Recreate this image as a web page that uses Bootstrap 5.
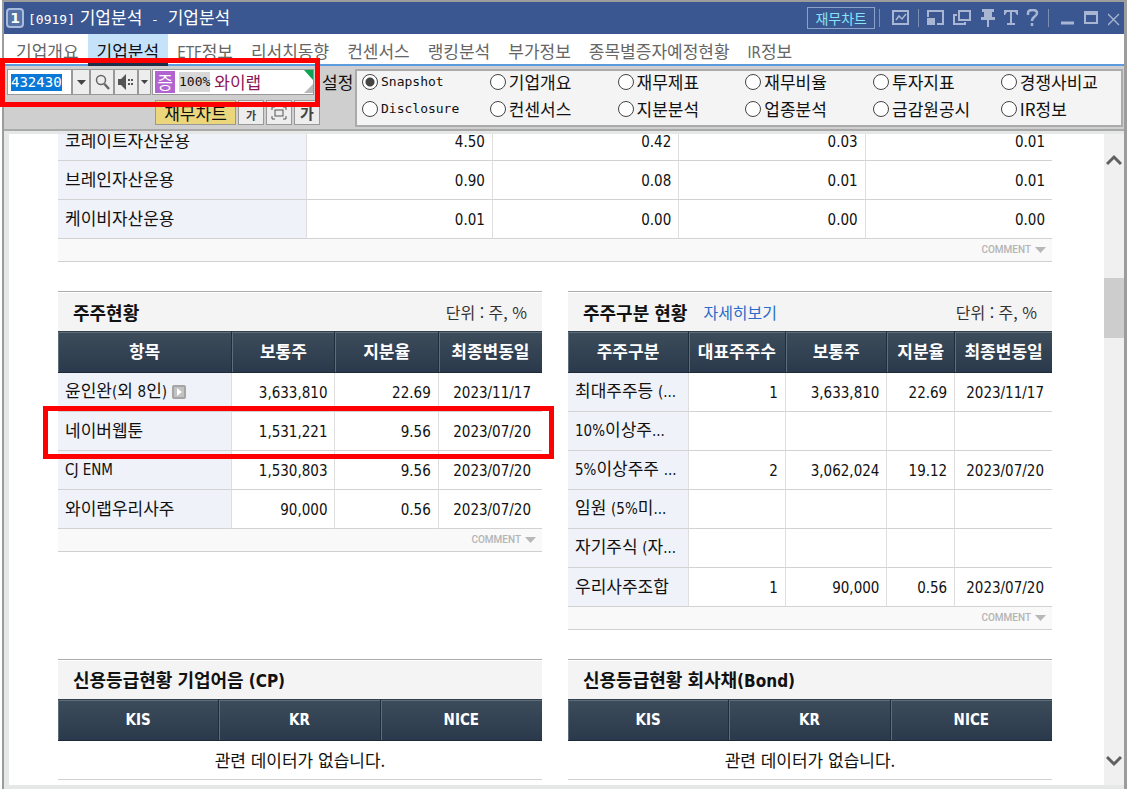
<!DOCTYPE html>
<html lang="ko">
<head>
<meta charset="utf-8">
<meta name="viewport" content="width=device-width, initial-scale=1">
<title>[0919] 기업분석 - 기업분석</title>
<link href="https://cdn.jsdelivr.net/npm/bootstrap@5.3.0/dist/css/bootstrap.min.css" rel="stylesheet">
<style>
  body { font-family: "Noto Sans CJK KR", sans-serif; font-size: 17px; line-height: 24px; color: #111; background: #fff; }
  button, input { font-family: inherit; line-height: inherit; }
  button { border: 0; padding: 0; background: none; color: inherit; }
  .latin { font-family: "DejaVu Sans Condensed", "Noto Sans", sans-serif; font-size: 15px; }
  .mono { font-family: "DejaVu Sans Mono", monospace; font-size: 13px; }
  .app { height: 100vh; margin-left: 2px; border: solid #9c9c9c; border-width: 2px 3px 0 2px; background: #e6e8e7; }

  .titlebar { height: 32px; padding: 0 4px 0 2px; background: #3a5791; color: #fff; }
  .winno { width: 18px; height: 20px; border: 2px solid #a9bbdd; border-radius: 4px; background: #5673a8; font: bold 14px/16px "DejaVu Sans", sans-serif; text-align: center; }
  .chartlink { height: 22px; padding: 0 7px; border: 1px solid #8da0c8; color: #86e4f6; font-size: 14px; line-height: 20px; }
  .titlebar svg { display: block; fill: none; stroke: #a9b6d3; stroke-width: 2; }
  .sep { width: 1px; height: 18px; background: #7e8db0; }

  .tabs { height: 32px; background: #fff; border-bottom: 2px solid #5d9bdf; padding-left: 3px; }
  .tabs a { height: 32px; padding: 0 9px; line-height: 34px; color: #666; text-decoration: none; white-space: nowrap; }
  .tabs a.active { background: #c5e2fb; color: #111; border-bottom: 3px solid #1d2e49; }

  .toolbar { height: 65px; background: #cfcfcf; border-bottom: 2px solid #a9a9a9; padding: 3px 0 3px 3px; }
  .tools { width: 348px; }
  .tools .line { height: 26px; }
  .codebox { width: 65px; height: 26px; border: 1px solid #999; background: #fff; padding: 0 3px; }
  .codebox input { width: 51px; border: 0; padding: 0; background: #0a78d6; color: #fff; font-family: "DejaVu Sans Mono", monospace; font-size: 14px; line-height: 17px; outline: 0; }
  .tbtn { width: 24px; height: 26px; border: 1px solid #999; background: #ededed; display: flex; align-items: center; justify-content: center; flex-shrink: 0; }
  .tbtn.drop { width: 18px; }
  .tbtn.drop-sm { width: 13px; margin-right: 1px; }
  .lower { gap: 2px; margin-right: 35px; padding-top: 5px; }
  .lower .tbtn { width: 26px; height: 25px; color: #444; font-weight: 700; }
  .lower .small-ga { font-size: 11px; padding-top: 5px; }
  .lower .big-ga { font-size: 15px; }
  .yellow { width: 81px; height: 25px; border: 1px solid #999; background: #ebd67c; line-height: 23px; }
  .namebox { width: 162px; height: 26px; border: 1px solid #999; background: #fff; padding-left: 2px; color: #8c1556; flex-shrink: 0; }
  .namebox .kind { width: 20px; height: 22px; background: #b263cf; color: #fff; text-align: center; line-height: 22px; }
  .namebox .pct { background: #d8d8d8; color: #111; height: 20px; line-height: 20px; }
  .corner { right: 0; top: 0; }
  .redbox { border: 5px solid #f00; pointer-events: none; }
  .redtools { left: -7px; top: -11px; width: 320px; height: 49px; z-index: 2; }
  .panel { border: 2px solid #ababab; background: #f4f4f4; height: 58px; padding-left: 5px; display: grid; grid-template-columns: repeat(5, 17fr) 16fr; grid-template-rows: 22px 32px; margin-right: 1px; }
  .panel label { display: flex; align-items: center; gap: 3px; white-space: nowrap; }
  .panel input { appearance: none; width: 16px; height: 16px; margin: 0; border: 1px solid #444; border-radius: 50%; background: #fff; }
  .panel input:checked { background: radial-gradient(circle, #444 4px, #fff 5px); }

  .view { margin: 3px 0 4px 5px; background: #fff; overflow: hidden; min-height: 0; }
  .doc { padding: 0 52px 0 49px; margin-top: -12px; }
  .duo { display: grid; grid-template-columns: 1fr 1fr; column-gap: 26px; align-items: start; }
  .grid { width: 100%; table-layout: fixed; border-collapse: separate; border-spacing: 0; margin: 0; }
  .grid td, .grid tbody th { height: 39px; padding: 0 7px; border-bottom: 1px solid #d2d2d2; border-right: 1px solid #dedede; white-space: nowrap; }
  .grid tbody th { background: #eff2f8; font-weight: 400; padding-bottom: 3px; line-height: 24px; }
  .grid td { font-family: "DejaVu Sans Condensed", "Noto Sans", sans-serif; font-size: 15px; text-align: right; padding-top: 2px; }
  .grid tr > :last-child { border-right: 0; }
  .grid td.none { font-family: inherit; font-size: 17px; text-align: center; padding: 0; }
  .dated td:last-child { padding-right: 11px; }
  .dated.wide td:last-child { padding-right: 8px; }
  .grid thead th { height: 42px; padding: 0 0 3px; color: #fff; text-align: center; font-weight: 700; white-space: nowrap; background: linear-gradient(#3d4c5a, #2a3a4c); border-top: 1px solid #333f4b; border-bottom: 1px solid #1d2a38; border-right: 1px solid #202e3c; box-shadow: inset 1px 1px #5c6d7b; }
  .grid thead th.agency { font-family: "DejaVu Sans Condensed", sans-serif; font-size: 15px; padding: 0; }
  .c-fund col:first-child { width: 25%; }
  .c-hold col:first-child { width: 36%; }
  .c-kind col:nth-child(1) { width: 25%; }
  .c-kind col:nth-child(2) { width: 20%; }
  .c-kind col:nth-child(3) { width: 21%; }
  .c-kind col:nth-child(4) { width: 14%; }
  .foot { height: 23px; border-bottom: 1px solid #d0d0d0; background: #f9f9f9; padding-right: 6px; }
  .foot button { font: 500 10px/20px Roboto, sans-serif; color: #b4b4b4; display: flex; align-items: center; gap: 4px; }
  .head { height: 40px; border-top: 1px solid #adadad; background: #f4f4f4; box-shadow: inset 0 1px #fff; padding: 0 15px; }
  .head h2 { font-size: 18px; font-weight: 700; margin: 0; line-height: 24px; }
  .head h2 .latin { font-size: 17px; }
  .head a { color: #2a6bc9; font-size: 16px; text-decoration: none; }
  .unit { font-size: 16px; color: #333; }
  .gap-sec { margin-top: 29px; }
  .play { width: 14px; height: 14px; }
  .marked { position: relative; }
  .marked th::after { content: ""; position: absolute; inset: -6px -12px -8px -15px; border: 5px solid #f00; pointer-events: none; }

  .scroll { width: 20px; background: #f0f0f0; margin: 3px 0 4px; padding: 20px 0 18px; }
  .scroll .thumb { margin-top: 112px; height: 60px; background: #cdcdcd; }
</style>
</head>
<body>
<div class="app d-flex flex-column">
  <header class="titlebar d-flex align-items-center flex-shrink-0">
    <span class="winno flex-shrink-0">1</span>
    <span class="ms-1 text-nowrap"><span class="mono">[0919]</span> 기업분석 <span class="mono mx-1">-</span> 기업분석</span>
    <div class="ms-auto d-flex align-items-center">
      <button class="chartlink">재무차트</button>
      <span class="sep mx-1"></span>
      <button class="ms-2" aria-label="차트"><svg width="18" height="16"><rect x="1" y="1" width="15" height="13"/><path d="M4 10l3-4 3 3 4-5" stroke-width="1.5"/></svg></button>
      <span class="sep ms-2"></span>
      <button class="ms-2" aria-label="화면 크기"><svg width="18" height="16"><path d="M1 7V1h15v13h-6"/><rect x="0" y="8" width="8" height="7" fill="#a9b6d3" stroke="none"/></svg></button>
      <button class="ms-2" aria-label="복사"><svg width="19" height="16"><path d="M6 1h11v9H6z"/><path d="M4 5H1v9h11v-2"/></svg></button>
      <button class="ms-2" aria-label="고정"><svg width="16" height="18"><path d="M2 0h12v3h-2v5h3v3H9v7H7v-7H1V8h3V3H2z" fill="#a9b6d3" stroke="none"/></svg></button>
      <button class="ms-2" aria-label="글꼴"><svg width="14" height="16"><path d="M0 0h14v5h-1l-2-3H8v11h3v2H3v-2h3V2H3L1 5H0z" fill="#a9b6d3" stroke="none"/></svg></button>
      <button class="ms-2" aria-label="도움말"><svg width="14" height="18"><path d="M2 6V4c0-4 9-4 9 0 0 4-5 3-5 8M6 14v3" stroke-width="2.5"/></svg></button>
      <span class="sep ms-2"></span>
      <button class="ms-2 ps-1" aria-label="최소화"><svg width="15" height="16"><path d="M0 13h13" stroke-width="3"/></svg></button>
      <button class="ms-2" aria-label="최대화"><svg width="16" height="16"><path d="M1 3h12v10H1z"/><path d="M0 3h14" stroke-width="4"/></svg></button>
      <button class="ms-2" aria-label="닫기"><svg width="12" height="16"><path d="M0 4l11 11M11 4L0 15" stroke-width="1.3"/></svg></button>
    </div>
  </header>

  <nav class="tabs d-flex flex-shrink-0">
    <a href="#">기업개요</a><a href="#" class="active">기업분석</a><a href="#"><span class="latin">ETF</span>정보</a><a href="#">리서치동향</a><a href="#">컨센서스</a><a href="#">랭킹분석</a><a href="#">부가정보</a><a href="#">종목별증자예정현황</a><a href="#"><span class="latin">IR</span>정보</a>
  </nav>

  <div class="toolbar d-flex flex-shrink-0">
    <div class="tools flex-shrink-0 position-relative">
      <div class="line d-flex align-items-center">
        <div class="codebox d-flex align-items-center flex-shrink-0"><input aria-label="종목코드" value="432430"></div>
        <button class="tbtn drop" aria-label="종목 목록"><svg width="9" height="5"><path d="M0 0h9L4.500 5z" fill="#444"/></svg></button>
        <button class="tbtn" aria-label="검색"><svg width="15" height="16" fill="none" stroke="#666"><circle cx="6" cy="6" r="4.500" stroke-width="1.500"/><path d="M9.500 10l4.500 5" stroke-width="2.500"/></svg></button>
        <button class="tbtn" aria-label="음성"><svg width="16" height="16" fill="#555"><path d="M0 5h3l5-5v16l-5-5H0zM10 5h2v2h-2zM10 9h2v2h-2zM13 5h2v2h-2zM13 9h2v2h-2z"/></svg></button>
        <button class="tbtn drop-sm" aria-label="음성 옵션"><svg width="7" height="4"><path d="M0 0h7L3.500 4z" fill="#444"/></svg></button>
        <div class="namebox d-flex align-items-center position-relative">
          <span class="kind">증</span><span class="pct mono ms-1 me-1">100%</span><span>와이랩</span>
          <svg class="corner position-absolute" width="9" height="24"><path d="M0 0h9v10z" fill="#0ca352"/><path d="M9 14v9H0z" fill="#bbb"/></svg>
        </div>
        <span class="ms-2 text-nowrap">설정</span>
      </div>
      <div class="lower d-flex justify-content-end">
        <button class="yellow">재무차트</button>
        <button class="tbtn small-ga">가</button>
        <button class="tbtn" aria-label="전체 화면"><svg width="16" height="14" fill="none" stroke="#555"><path d="M1 4V1h3M12 1h3v3M15 10v3h-3M4 13H1v-3"/><rect x="4" y="4" width="8" height="6"/></svg></button>
        <button class="tbtn big-ga">가</button>
      </div>
      <div class="redbox redtools position-absolute"></div>
    </div>
    <div class="panel flex-grow-1">
      <label><input type="radio" name="view" checked><span class="mono">Snapshot</span></label>
      <label><input type="radio" name="view">기업개요</label>
      <label><input type="radio" name="view">재무제표</label>
      <label><input type="radio" name="view">재무비율</label>
      <label><input type="radio" name="view">투자지표</label>
      <label><input type="radio" name="view">경쟁사비교</label>
      <label><input type="radio" name="view"><span class="mono">Disclosure</span></label>
      <label><input type="radio" name="view">컨센서스</label>
      <label><input type="radio" name="view">지분분석</label>
      <label><input type="radio" name="view">업종분석</label>
      <label><input type="radio" name="view">금감원공시</label>
      <label><input type="radio" name="view">IR정보</label>
    </div>
  </div>

  <div class="d-flex flex-grow-1 overflow-hidden">
    <main class="view flex-grow-1">
      <div class="doc">
        <table class="grid c-fund">
          <colgroup><col><col><col><col><col></colgroup>
          <tbody>
            <tr><th scope="row">코레이트자산운용</th><td>4.50</td><td>0.42</td><td>0.03</td><td>0.01</td></tr>
            <tr><th scope="row">브레인자산운용</th><td>0.90</td><td>0.08</td><td>0.01</td><td>0.01</td></tr>
            <tr><th scope="row">케이비자산운용</th><td>0.01</td><td>0.00</td><td>0.00</td><td>0.00</td></tr>
          </tbody>
        </table>
        <div class="foot d-flex justify-content-end"><button>COMMENT <svg width="11" height="6"><path d="M0 0h11L5.500 6z" fill="#b8b8b8"/></svg></button></div>

        <div class="duo gap-sec">
          <section>
            <div class="head d-flex align-items-center justify-content-between"><h2>주주현황</h2><span class="unit">단위 : 주, %</span></div>
            <table class="grid c-hold dated">
              <colgroup><col><col><col><col></colgroup>
              <thead><tr><th>항목</th><th>보통주</th><th>지분율</th><th>최종변동일</th></tr></thead>
              <tbody>
                <tr><th scope="row">윤인완<span class="latin">(</span>외 <span class="latin">8</span>인<span class="latin">)</span> <svg class="play" viewBox="0 0 14 14"><rect width="14" height="14" rx="2" fill="#a5a5a5"/><rect x="2" y="2" width="10" height="10" fill="#c2c2c2"/><path d="M5 3l5 4-5 4z" fill="#fff"/></svg></th><td>3,633,810</td><td>22.69</td><td>2023/11/17</td></tr>
                <tr class="marked"><th scope="row">네이버웹툰</th><td>1,531,221</td><td>9.56</td><td>2023/07/20</td></tr>
                <tr><th scope="row"><span class="latin">CJ ENM</span></th><td>1,530,803</td><td>9.56</td><td>2023/07/20</td></tr>
                <tr><th scope="row">와이랩우리사주</th><td>90,000</td><td>0.56</td><td>2023/07/20</td></tr>
              </tbody>
            </table>
            <div class="foot d-flex justify-content-end"><button>COMMENT <svg width="11" height="6"><path d="M0 0h11L5.500 6z" fill="#b8b8b8"/></svg></button></div>
          </section>
          <section>
            <div class="head d-flex align-items-center"><h2>주주구분 현황</h2><a href="#" class="ms-3">자세히보기</a><span class="unit ms-auto">단위 : 주, %</span></div>
            <table class="grid c-kind dated wide">
              <colgroup><col><col><col><col><col></colgroup>
              <thead><tr><th>주주구분</th><th>대표주주수</th><th>보통주</th><th>지분율</th><th>최종변동일</th></tr></thead>
              <tbody>
                <tr><th scope="row">최대주주등 <span class="latin">(...</span></th><td>1</td><td>3,633,810</td><td>22.69</td><td>2023/11/17</td></tr>
                <tr><th scope="row"><span class="latin">10%</span>이상주<span class="latin">...</span></th><td></td><td></td><td></td><td></td></tr>
                <tr><th scope="row"><span class="latin">5%</span>이상주주 <span class="latin">...</span></th><td>2</td><td>3,062,024</td><td>19.12</td><td>2023/07/20</td></tr>
                <tr><th scope="row">임원 <span class="latin">(5%</span>미<span class="latin">...</span></th><td></td><td></td><td></td><td></td></tr>
                <tr><th scope="row">자기주식 <span class="latin">(</span>자<span class="latin">...</span></th><td></td><td></td><td></td><td></td></tr>
                <tr><th scope="row">우리사주조합</th><td>1</td><td>90,000</td><td>0.56</td><td>2023/07/20</td></tr>
              </tbody>
            </table>
            <div class="foot d-flex justify-content-end"><button>COMMENT <svg width="11" height="6"><path d="M0 0h11L5.500 6z" fill="#b8b8b8"/></svg></button></div>
          </section>
        </div>

        <div class="duo gap-sec">
          <section>
            <div class="head d-flex align-items-center"><h2>신용등급현황 기업어음 <span class="latin">(CP)</span></h2></div>
            <table class="grid">
              <thead><tr><th class="agency">KIS</th><th class="agency">KR</th><th class="agency">NICE</th></tr></thead>
              <tbody><tr><td colspan="3" class="none">관련 데이터가 없습니다.</td></tr></tbody>
            </table>
          </section>
          <section>
            <div class="head d-flex align-items-center"><h2>신용등급현황 회사채<span class="latin">(Bond)</span></h2></div>
            <table class="grid">
              <thead><tr><th class="agency">KIS</th><th class="agency">KR</th><th class="agency">NICE</th></tr></thead>
              <tbody><tr><td colspan="3" class="none">관련 데이터가 없습니다.</td></tr></tbody>
            </table>
          </section>
        </div>
      </div>
    </main>
    <div class="scroll d-flex flex-column align-items-center flex-shrink-0">
      <svg width="16" height="12" fill="none" stroke="#606060" stroke-width="3"><path d="M1 10l7-7 7 7"/></svg>
      <div class="thumb w-100"></div>
      <svg class="mt-auto" width="16" height="12" fill="none" stroke="#606060" stroke-width="3"><path d="M1 2l7 7 7-7"/></svg>
    </div>
  </div>
</div>
<script src="https://cdn.jsdelivr.net/npm/bootstrap@5.3.0/dist/js/bootstrap.bundle.min.js"></script>
</body>
</html>
